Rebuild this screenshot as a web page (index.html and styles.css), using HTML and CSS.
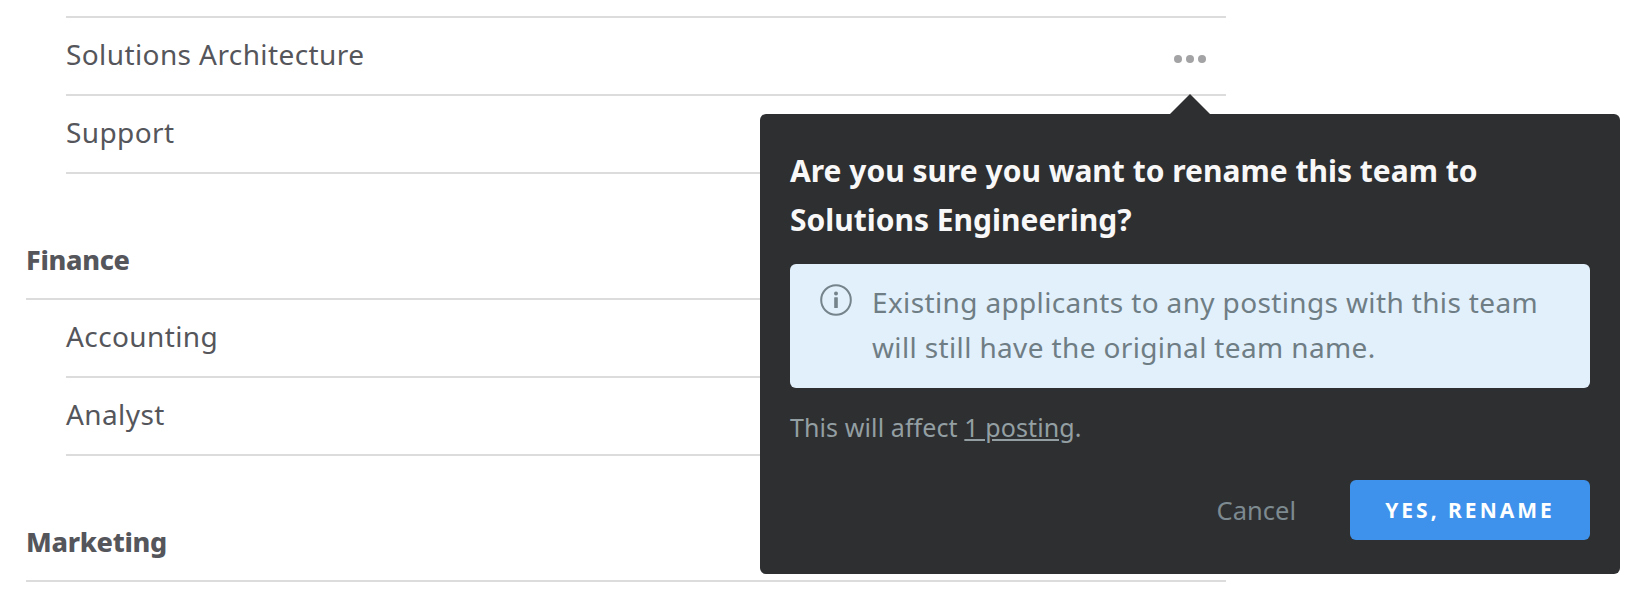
FILE: index.html
```html
<!DOCTYPE html>
<html lang="en">
<head>
<meta charset="utf-8">
<title>Teams</title>
<link rel="stylesheet" href="styles.css">
</head>
<body>
<main class="teams">
  <ul class="rows first">
    <li class="row"><span>Solutions Architecture</span>
      <span class="more" aria-label="More"><i></i><i></i><i></i></span>
    </li>
    <li class="row"><span>Support</span></li>
  </ul>
  <h2 class="group">Finance</h2>
  <ul class="rows">
    <li class="row"><span>Accounting</span></li>
    <li class="row"><span>Analyst</span></li>
  </ul>
  <h2 class="group">Marketing</h2>
</main>
<section class="popup">
  <span class="arrow"></span>
  <h3 class="title">Are you sure you want to rename this team to Solutions Engineering?</h3>
  <div class="notice">
    <svg class="info" width="32" height="32" viewBox="0 0 32 32" fill="none">
      <circle cx="16" cy="16" r="14.8" stroke="#75838a" stroke-width="2"/>
      <rect x="14.2" y="13.2" width="3.6" height="10.8" rx="0.6" fill="#75838a"/>
      <circle cx="16" cy="9.5" r="2" fill="#75838a"/>
    </svg>
    <p>Existing applicants to any postings with this team will still have the original team name.</p>
  </div>
  <p class="affect">This will affect <a href="#">1 posting</a>.</p>
  <div class="actions">
    <span class="cancel">Cancel</span>
    <button class="confirm" type="button">YES, RENAME</button>
  </div>
</section>
</body>
</html>
```
FILE: styles.css
```css
* { box-sizing: border-box; }
html, body { margin: 0; height: 600px; overflow: hidden; background: #fff; }
body { font-family: "Noto Sans", "Open Sans", sans-serif; color: #55565b; position: relative; }
.teams { width: 1226px; padding: 16px 0 0 26px; }
.rows { list-style: none; margin: 0 0 0 40px; padding: 0; border-top: 2px solid #dcdcdc; }
.row { height: 78px; border-bottom: 2px solid #dcdcdc; display: flex; align-items: center; justify-content: space-between; font-size: 28px; letter-spacing: 0.4px; padding-bottom: 4px; }
.group { margin: 0; height: 126px; display: flex; align-items: flex-end; padding-bottom: 20px; font-size: 27px; font-weight: 800; letter-spacing: -0.3px; border-bottom: 2px solid #dcdcdc; }
.rows:not(.first) { border-top: 0; }
.more { display: flex; gap: 4px; margin: 9px 20px 0 0; }
.more i { width: 8px; height: 8px; border-radius: 50%; background: #a3a3a5; }
.popup { position: absolute; left: 760px; top: 114px; width: 860px; height: 460px; background: #2e2f31; border-radius: 6px; padding: 32px 30px 30px; color: #fff; }
.arrow { position: absolute; left: 410px; top: -20px; width: 0; height: 0; border-left: 20px solid transparent; border-right: 20px solid transparent; border-bottom: 20px solid #2e2f31; }
.title { margin: 0; font-size: 30px; line-height: 49px; font-weight: 700; color: #f8f8f8; }
.notice { margin-top: 20px; height: 124px; background: #e2f0fc; border-radius: 6px; display: flex; gap: 20px; padding: 16px 30px; color: #6f7d84; font-size: 28px; letter-spacing: 0.36px; line-height: 45px; }
.notice p { margin: 0; }
.info { flex: none; margin-top: 4px; }
.affect { margin: 19px 0 0; font-size: 25px; letter-spacing: 0.1px; line-height: 40px; color: #939fa2; }
.affect a { color: inherit; }
.actions { display: flex; justify-content: flex-end; align-items: center; gap: 54px; margin-top: 33px; }
.cancel { font-size: 25.5px; color: #7d8a90; }
.confirm { width: 240px; height: 60px; border: 0; border-radius: 6px; background: #3e92eb; color: #fff; font: 700 21px "Noto Sans", sans-serif; letter-spacing: 3px; }
```
